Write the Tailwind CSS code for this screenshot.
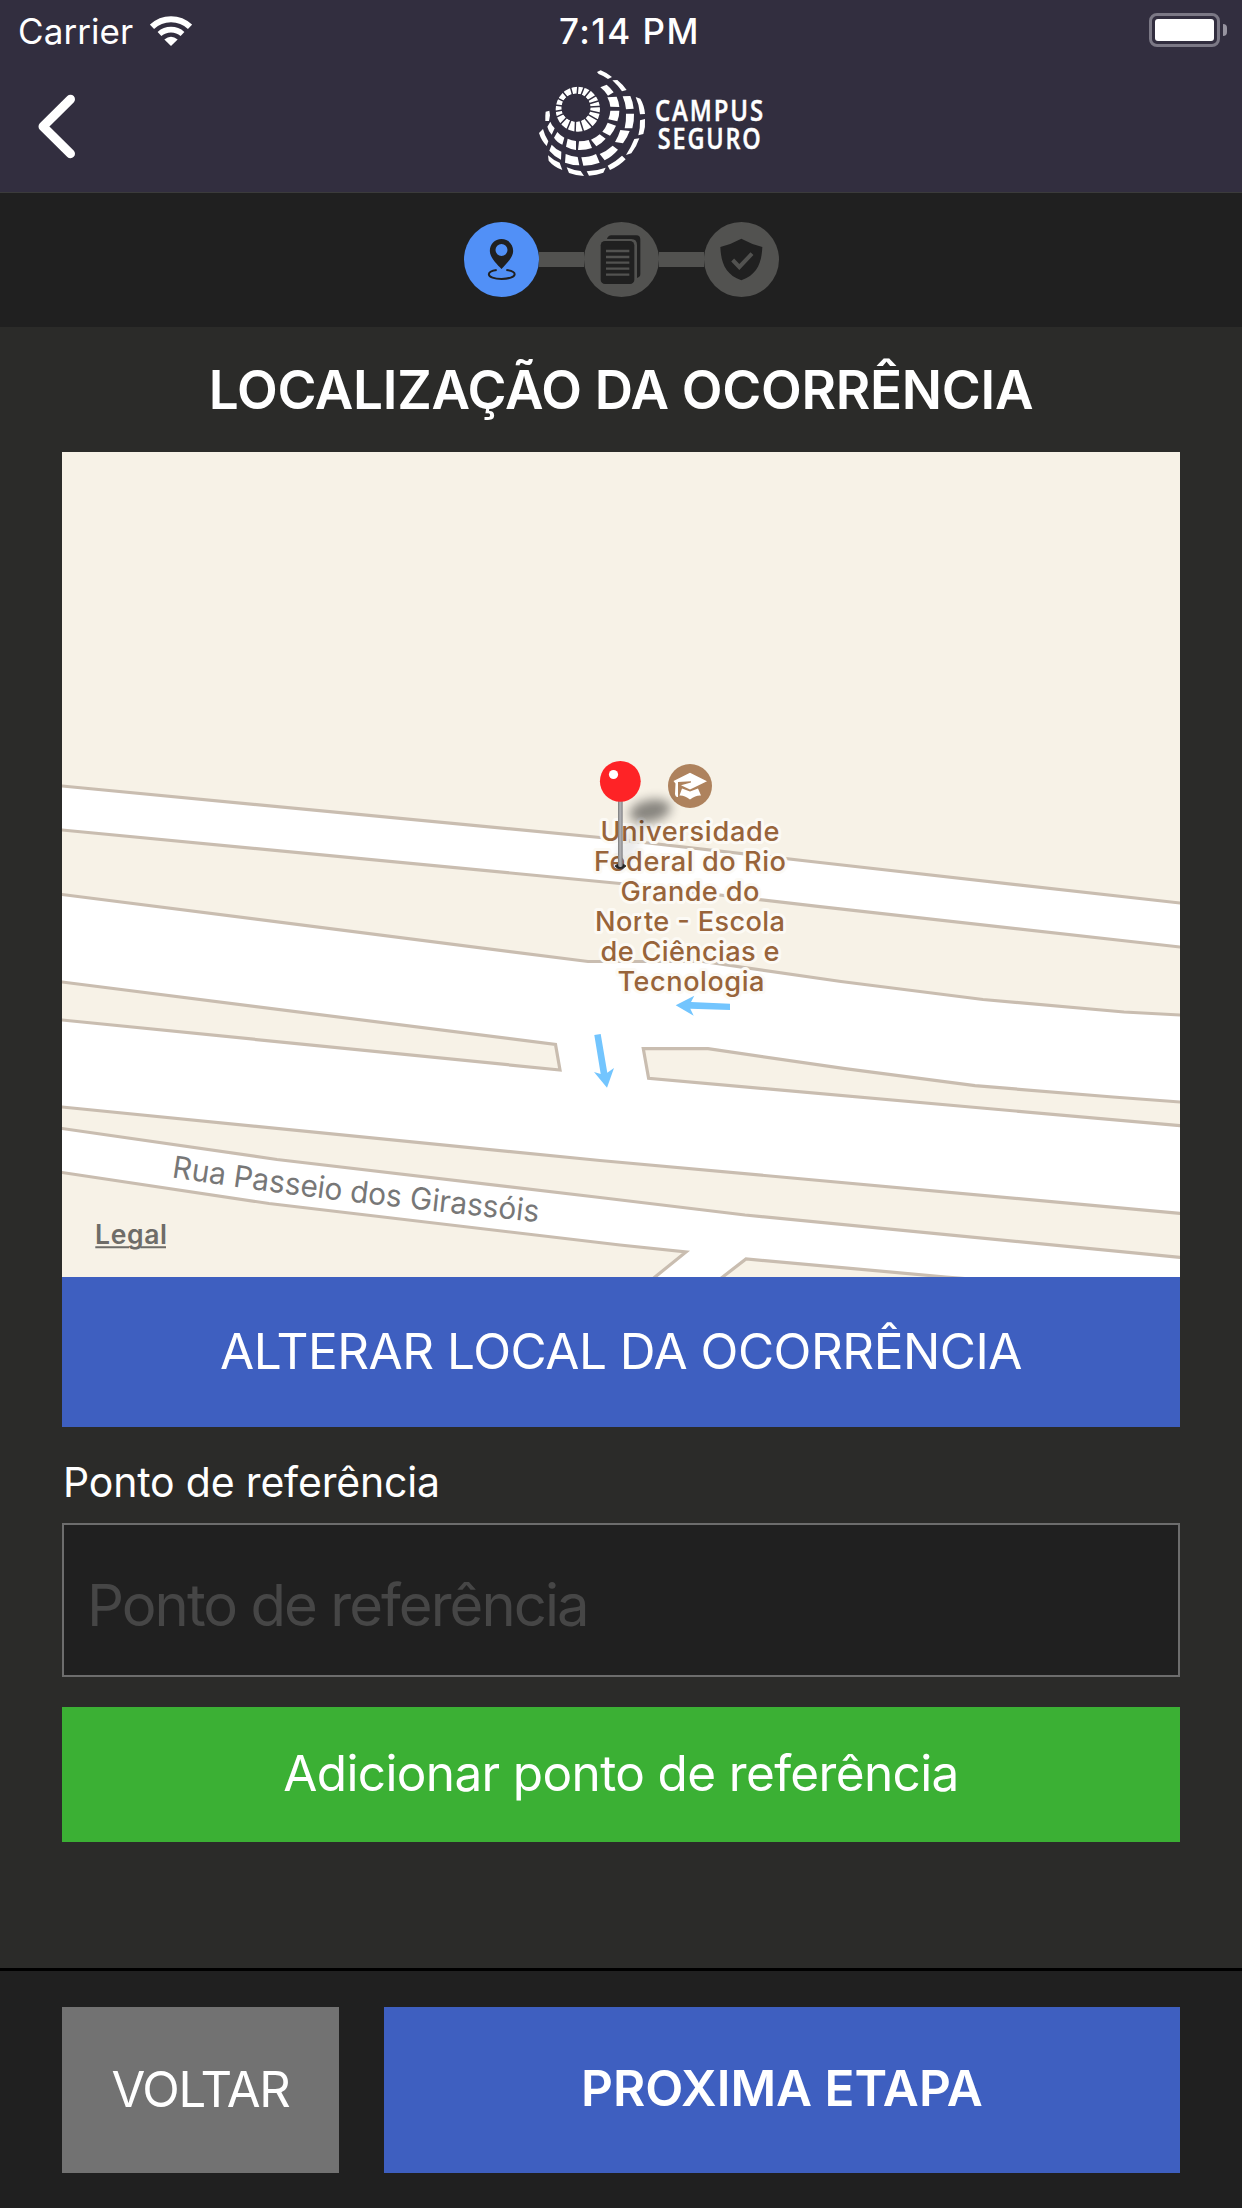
<!DOCTYPE html>
<html lang="pt-BR">
<head>
<meta charset="utf-8">
<title>Campus Seguro</title>
<script src="https://cdn.jsdelivr.net/npm/@tailwindcss/browser@4"></script>
</head>
<body class="bg-[#2b2b29]">
<div class="flex h-[2208px] w-[1242px] flex-col overflow-hidden bg-[#2b2b29] font-[Inter,sans-serif] text-white">

  <header class="flex h-[193px] shrink-0 flex-col border-b border-[#3b3b3b] bg-[#322e3f]">
    <!-- Status bar -->
    <div class="flex h-[62px] items-center">
      <div class="flex w-[559px] items-center pl-[18px]">
        <span class="w-[132px] text-[35px] leading-none tracking-[0.08px]">Carrier</span>
        <svg class="h-[30px] w-[42px]" viewBox="0 0 126 90">
          <g fill="none" stroke="#fff">
            <path d="M6 32.500A83 83 0 0 1 120 32.500" stroke-width="18"/>
            <path d="M28.500 54A52 52 0 0 1 97.500 54" stroke-width="17"/>
          </g>
          <path d="M43 70.500Q63 54.500 83 70.500L63 90Z" fill="#fff"/>
        </svg>
      </div>
      <span class="text-[35px] leading-none font-medium tracking-[1.46px]">7:14 PM</span>
      <div class="mr-[15px] mb-[2px] ml-auto flex items-center gap-[3px]">
        <div class="h-[34px] w-[71px] rounded-[8px] border-3 border-[#7b7885] p-[3px]"><div class="h-full rounded-[3px] bg-white"></div></div>
        <div class="h-[12px] w-[4px] rounded-r-full bg-[#9794a0]"></div>
      </div>
    </div>
    <!-- Navigation bar -->
    <div class="grid h-[130px] grid-cols-[520px_260px_1fr]">
      <svg class="mt-[32px] ml-[37px] h-[66px] w-[40px]" viewBox="0 0 40 66" fill="none" stroke="#fff" stroke-width="9" stroke-linecap="round" stroke-linejoin="round"><path d="M33.500 5.200L6 32.500L33.500 59.700"/></svg>
      <div class="flex h-[130px] w-[260px]">
        <svg class="h-[130px] w-[135px] shrink-0" viewBox="0 186 405 390">
          <path fill="#fff" fill-rule="evenodd" d="M107 328a66.500 67.500 0 1 0 133 0a66.500 67.500 0 1 0 -133 0ZM125 323a43 42 0 1 1 86 0a43 42 0 1 1 -86 0Z"/>
          <g stroke="#322e3f" stroke-width="4.500">
            <path d="M168 323L174 255M168 323L195 255M168 323L216 265M168 323L233 284M168 323L245 300M168 323L248 319M168 323L248 341M168 323L240 364M168 323L222 388M168 323L193 402M168 323L165 404M168 323L139 394M168 323L116 378M168 323L101 355M168 323L99 335M168 323L99 314M168 323L108 292M168 323L126 273M168 323L150 256"/>
          </g>
          <ellipse cx="168" cy="323" rx="43" ry="42" fill="#322e3f"/>
          <g fill="#fff">
            <path d="M231 216L242 211Q260 218 276 231L264 237Q250 227 236 222Z"/>
            <path d="M277 241L292 240Q307 252 320 270L306 274Q294 257 277 241Z"/>
            <path d="M241 262L260 254Q272 264 281 277L264 287Q256 274 241 262Z"/>
            <path d="M262 292L290 290Q296 303 298 321L271 320Q269 304 262 292Z"/>
            <path d="M308 289L331 288Q339 305 341 326L318 328Q316 307 308 289Z"/>
            <path d="M347 291L361 296Q373 316 375 342L360 343Q358 315 347 291Z"/>
            <path d="M271 332L298 332Q298 349 292 364L265 358Q270 346 271 332Z"/>
            <path d="M318 341L342 341Q343 364 337 385L314 385Q319 364 318 341Z"/>
            <path d="M360 361L375 357Q377 381 370 402L355 406Q361 384 360 361Z"/>
            <path d="M263 368L288 377Q282 392 270 407L247 395Q257 383 263 368Z"/>
            <path d="M301 390L329 393Q322 413 309 430L285 426Q295 410 301 390Z"/>
            <path d="M343 417L358 415Q350 440 334 460L318 465Q333 442 343 417Z"/>
            <path d="M213 419Q227 414 239 403L257 416Q245 430 229 439Z"/>
            <path d="M239 462Q260 453 278 437L294 449Q276 470 254 481Z"/>
            <path d="M263 497Q287 485 306 467L317 478Q298 498 270 510Z"/>
            <path d="M177 424Q193 424 206 420L216 444Q196 451 174 450Z"/>
            <path d="M184 472Q208 472 228 462L239 488Q215 497 190 497Z"/>
            <path d="M200 514Q229 513 257 503L250 518Q230 525 207 527Z"/>
            <path d="M143 416Q155 422 168 423L168 450Q152 448 138 440Z"/>
            <path d="M137 462Q154 469 173 471L178 496Q157 496 135 488Z"/>
            <path d="M140 502Q160 511 182 513L192 528Q169 527 147 519Z"/>
            <path d="M112 396Q121 407 133 413L127 434Q112 428 102 413Z"/>
            <path d="M95 434Q107 448 124 455L123 479Q102 469 88 452Z"/>
            <path d="M84 466Q100 481 119 488L127 510Q102 501 86 482Z"/>
            <path d="M91 365Q95 376 104 385L95 404Q85 393 82 380Z"/>
            <path d="M69 387Q74 407 85 424L80 438Q64 422 57 399Z"/>
            <path d="M77 335L88 332L90 346L87 363L76 363Q75 349 77 335Z"/>
          </g>
        </svg>
        <svg class="h-[130px] w-[125px] shrink-0 overflow-visible" viewBox="135 62 125 130" fill="#fff" stroke="#fff" stroke-width=".5" font-family="Open Sans, Noto Sans, sans-serif" font-weight="600" font-size="29.600">
          <text x="135" y="121" textLength="110" lengthAdjust="spacingAndGlyphs" letter-spacing="2.400">CAMPUS</text>
          <text x="137.700" y="149.300" textLength="105" lengthAdjust="spacingAndGlyphs" letter-spacing="2.400">SEGURO</text>
        </svg>
      </div>
    </div>
  </header>

  <!-- Progress steps -->
  <div class="flex h-[134px] shrink-0 items-center justify-center bg-[#202020] pb-[2px]">
    <div class="size-[75px] rounded-full bg-[#5190f7]">
      <svg viewBox="0 0 225 225" fill="#202020">
        <path fill-rule="evenodd" d="M112.500 51C92 51 77.500 67 77.500 87C77.500 106 98 126 112.500 141C127 126 147.500 106 147.500 87C147.500 67 133 51 112.500 51ZM112.500 66a18 18 0 1 1 0 36a18 18 0 1 1 0-36Z"/>
        <path d="M98 144C83 146 74.500 151 74.500 157C74.500 165 91 171 112.500 171S152 165 152 157C152 151 142 146 127 144" fill="none" stroke="#202020" stroke-width="6"/>
      </svg>
    </div>
    <div class="h-[15px] w-[45px] bg-[#525250]"></div>
    <div class="size-[75px] rounded-full bg-[#525250]">
      <svg viewBox="0 0 225 225" fill="#202020">
        <path d="M69 51Q72 40 82 40H157Q169 40 169 53V157Q169 165 159 168V69Q159 51 142 51Z"/>
        <rect x="50" y="57" width="101" height="129" rx="13"/>
        <path d="M66 87H136M66 105H136M66 122H136M66 140H136M66 158H136" stroke="#525250" stroke-width="7"/>
      </svg>
    </div>
    <div class="h-[15px] w-[45px] bg-[#525250]"></div>
    <div class="size-[75px] rounded-full bg-[#525250]">
      <svg viewBox="0 0 225 225" fill="#202020">
        <path d="M112 50Q141 66 175 75C173 122 160 158 112 175C64 158 51 122 49 75Q83 66 112 50Z"/>
        <path d="M86 114L106 135L144 95" fill="none" stroke="#525250" stroke-width="12"/>
      </svg>
    </div>
  </div>

  <main class="flex flex-1 flex-col px-[62px]">
    <h1 class="flex h-[125px] items-center justify-center pt-[2px] text-[53px] leading-none font-semibold tracking-[-0.3px] whitespace-nowrap">LOCALIZAÇÃO DA OCORRÊNCIA</h1>

    <!-- Map, drawn in page coordinates -->
    <svg class="block h-[825px] w-[1118px] shrink-0 bg-white" viewBox="62 452 1118 825">
      <defs>
        <filter id="soft" x="-80%" y="-120%" width="260%" height="340%"><feGaussianBlur stdDeviation="5.500"/></filter>
        <linearGradient id="stick"><stop offset="0" stop-color="#777"/><stop offset=".45" stop-color="#b5b5b8"/><stop offset="1" stop-color="#808084"/></linearGradient>
        <path id="street" d="M171 1177.300Q260 1191 341 1200.500T560 1224.500"/>
      </defs>
      <g fill="#f7f2e7" stroke="#c9bdb0" stroke-width="3.200">
        <path d="M50 784.800L62 786L600 837.500L820 862.500L1180 903L1200 905V440H50Z"/>
        <path d="M50 829L62 830L620 883.500L820 906.700L1180 947L1200 949V1016L1180 1015L1124 1012L983 999.500L841 981.500L703 961.500H588L62 894.500L50 893Z"/>
        <path d="M50 980.500L62 982L555.500 1044.500L560 1070L62 1020L50 1019Z"/>
        <path d="M643.300 1048.700H708L845 1068.700L975 1085.700L1113 1097L1180 1102L1200 1103.500V1127.500L1180 1125.700L648.600 1078.300Z"/>
        <path d="M50 1105.700L62 1107L600 1160.500L1180 1213.300L1200 1215V1259L1180 1257.300L745 1215L600 1197.500L277 1159.500L62 1128.500L50 1127Z"/>
        <path d="M50 1170.700L62 1172.500L269 1203.500L620 1245L686 1252L655 1277L640 1290H50Z"/>
        <path d="M706 1290L723 1276.700L746 1259L946 1277L1100 1290Z"/>
      </g>
      <g fill="#73c5fe">
        <path d="M675.700 1005.300L694.300 995.700L691 1002L730 1003.700V1010L690.300 1008.700L693.700 1015.700Z"/>
        <path d="M607 1087.700L594 1072L600.700 1074L594.300 1035L600.700 1034L607.300 1072.700L614 1068Z"/>
      </g>
      <text font-size="30.500" fill="#777"><textPath href="#street" textLength="370" lengthAdjust="spacingAndGlyphs">Rua Passeio dos Girassóis</textPath></text>
      <circle cx="690" cy="786" r="22" fill="#ae825d"/>
      <g fill="#fff">
        <path d="M673.500 781L690 772.700L707 781.200L690 789.500L681 785.200L691 782.500V781.200L678 782V797Q675.500 797.500 675 794L675.500 783.500Z"/>
        <path d="M682 788.500L690 791.500L698 788.500L701 795.500Q696 795 690 799.500Q684 795 679.500 795.500Z"/>
      </g>
      <g font-size="27.200" font-weight="500" fill="#98643a" stroke="#fcfaf5" stroke-width="6" stroke-linejoin="round" paint-order="stroke" text-anchor="middle">
        <text x="690" y="840.500" textLength="179">Universidade</text>
        <text x="690" y="870.500" textLength="192">Federal do Rio</text>
        <text x="690" y="900.500" textLength="139">Grande do</text>
        <text x="690" y="930.500" textLength="190">Norte - Escola</text>
        <text x="690" y="960.500" textLength="179">de Ciências e</text>
        <text x="691" y="990.500" textLength="147">Tecnologia</text>
      </g>
      <ellipse cx="650" cy="811" rx="21" ry="11" transform="rotate(-12 650 811)" fill="#000" opacity=".45" filter="url(#soft)"/>
      <ellipse cx="629" cy="846" rx="8" ry="22" transform="rotate(25 629 846)" fill="#000" opacity=".09" filter="url(#soft)"/>
      <path d="M615 866Q620 872 626 866L623 864H618Z" fill="#222" stroke="#333"/>
      <rect x="618" y="798" width="4.700" height="69" rx="2" fill="url(#stick)"/>
      <circle cx="620.300" cy="781.300" r="20.400" fill="#fe2326"/>
      <circle cx="613.500" cy="774.500" r="4.600" fill="#fff"/>
      <text x="95" y="1243.800" font-size="26.500" font-weight="600" fill="#6e6c68" textLength="72">Legal</text>
      <path d="M95.300 1247.200H129M140.500 1247.200H166" stroke="#6e6c68" stroke-width="2"/>
    </svg>

    <button class="flex h-[150px] shrink-0 items-center justify-center text-[49.5px] leading-none tracking-[-0.48px] whitespace-nowrap bg-[#3e5fc0]">ALTERAR LOCAL DA OCORRÊNCIA</button>

    <label for="ref" class="flex h-[96px] shrink-0 items-center pt-[14px] pl-px text-[41px] leading-none tracking-[-0.18px]">Ponto de referência</label>
    <input id="ref" type="text" placeholder="Ponto de referência" class="h-[154px] w-full shrink-0 border-2 border-[#6d6d6d] bg-[#202020] pt-[10px] pl-[23px] text-[58px] leading-none tracking-[-1.96px] placeholder:text-[#464646]">

    <button class="mt-[30px] flex h-[135px] shrink-0 items-center justify-center bg-[#3bb034] pb-[1px] text-[49.5px] leading-none tracking-[-0.64px] whitespace-nowrap">Adicionar ponto de referência</button>
  </main>

  <footer class="flex h-[240px] shrink-0 gap-[45px] border-t-3 border-black bg-[#202020] px-[62px] pt-[36px] pb-[35px]">
    <button class="flex w-[277px] items-center justify-center bg-[#727272] pb-[1px] text-[49px] leading-none tracking-[-1.2px]">VOLTAR</button>
    <button class="flex flex-1 items-center justify-center bg-[#3e5fc0] pb-[2px] text-[49.5px] leading-none font-semibold">PROXIMA ETAPA</button>
  </footer>
</div>
</body>
</html>
